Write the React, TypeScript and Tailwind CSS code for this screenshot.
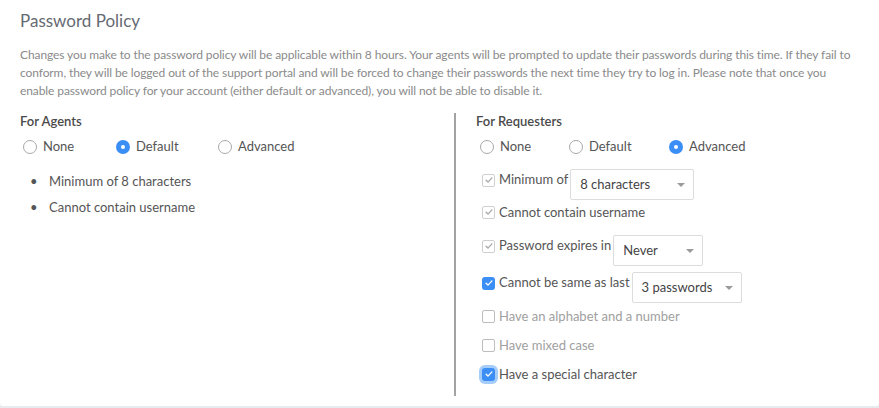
import React from 'react';

const font = { fontFamily: 'Lato, "Open Sans", sans-serif' };

function Radio({ checked, label }: { checked?: boolean; label: string }) {
  return (
    <label className="flex items-center gap-[6px]">
      {checked ? (
        <span className="flex h-[14px] w-[14px] items-center justify-center rounded-full bg-[#3a8ef6]">
          <span className="h-[4px] w-[4px] rounded-full bg-white" />
        </span>
      ) : (
        <span className="h-[14px] w-[14px] rounded-full border border-[#a9a9a9] bg-white" />
      )}
      <span>{label}</span>
    </label>
  );
}

function Check({ state }: { state: 'muted' | 'on' | 'off' | 'focus' }) {
  const tick = (color: string) => (
    <svg viewBox="0 0 12 12" className="h-[10px] w-[10px]">
      <path d="M2.5 6.2l2.3 2.3 4.7-5" fill="none" stroke={color} strokeWidth="1.6" strokeLinecap="round" strokeLinejoin="round" />
    </svg>
  );
  if (state === 'muted')
    return (
      <span className="flex h-[13px] w-[13px] shrink-0 items-center justify-center rounded-[2px] border border-[#cfcfcf] bg-white">
        {tick('#a8a8a8')}
      </span>
    );
  if (state === 'off')
    return <span className="h-[13px] w-[13px] shrink-0 rounded-[2px] border border-[#bdbdbd] bg-white" />;
  return (
    <span
      className={`flex h-[13px] w-[13px] shrink-0 items-center justify-center rounded-[3px] bg-[#3a8ef6] ${
        state === 'focus' ? 'ring-[3px] ring-[#a6cdf9]' : ''
      }`}
    >
      {tick('#ffffff')}
    </span>
  );
}

function Select({ value, width }: { value: string; width: string }) {
  return (
    <div className={`ml-[2px] flex h-[31px] ${width} items-center justify-between rounded-[2px] border border-[#dcdcdc] bg-white pl-[9px] pr-[8px] text-[#444]`}>
      <span>{value}</span>
      <span className="h-0 w-0 border-x-[4px] border-t-[4px] border-x-transparent border-t-[#9a9a9a]" />
    </div>
  );
}

// label that sits beside a select, aligned a little above the select's middle
function SelectRow({ check, label, value, width, className }: {
  check: 'muted' | 'on';
  label: string;
  value: string;
  width: string;
  className: string;
}) {
  return (
    <div className={`flex items-start ${className}`}>
      <div className="mt-[3px] flex h-[16px] items-center gap-[4px]">
        <Check state={check} />
        <span>{label}</span>
      </div>
      <Select value={value} width={width} />
    </div>
  );
}

export default function App() {
  return (
    <div className="h-[408px] w-[879px] bg-[#e8ebee]" style={font}>
      <div className="h-[406px] rounded-b-[3px] bg-white px-5 pt-[9px]">
        <h1 className="text-[17px] leading-[24px] text-[#656a72]">Password Policy</h1>
        <p className="mt-[13px] text-[12px] leading-[18px] tracking-[-0.1px] text-[#8a8a8a]">
          Changes you make to the password policy will be applicable within 8 hours. Your agents will be prompted to
          update their passwords during this time. If they fail to conform, they will be logged out of the support
          portal and will be forced to change their passwords the next time they try to log in. Please note that once
          you enable password policy for your account (either default or advanced), you will not be able to disable it.
        </p>

        <div className="mt-[13px] flex text-[13px] text-[#555]">
          <div className="w-[434px]">
            <h2 className="font-semibold leading-[16px] text-[#4a4a4a]">For Agents</h2>
            <div className="mt-[9px] flex h-[18px] items-center pl-[3px]">
              <div className="w-[93px]"><Radio label="None" /></div>
              <div className="w-[102px]"><Radio checked label="Default" /></div>
              <Radio label="Advanced" />
            </div>
            <ul className="mt-[16px] flex flex-col gap-[8px] pl-[10px]">
              <li className="flex items-center leading-[18px]">
                <span className="w-[19px] text-[#555]">•</span>Minimum of 8 characters
              </li>
              <li className="flex items-center leading-[18px]">
                <span className="w-[19px] text-[#555]">•</span>Cannot contain username
              </li>
            </ul>
          </div>

          <div className="h-[283px] border-l-2 border-[#a3a3a3] pl-5">
            <h2 className="font-semibold leading-[16px] text-[#4a4a4a]">For Requesters</h2>
            <div className="mt-[9px] flex h-[18px] items-center pl-[4px]">
              <div className="w-[89px]"><Radio label="None" /></div>
              <div className="w-[100px]"><Radio label="Default" /></div>
              <Radio checked label="Advanced" />
            </div>

            <div className="mt-[13px] flex flex-col pl-[6px]">
              <SelectRow check="muted" label="Minimum of" value="8 characters" width="w-[124px]" className="" />
              <div className="mt-[3px] flex items-center gap-[4px] leading-[18px]">
                <Check state="muted" />
                <span>Cannot contain username</span>
              </div>
              <SelectRow check="muted" label="Password expires in" value="Never" width="w-[90px]" className="mt-[14px]" />
              <SelectRow check="on" label="Cannot be same as last" value="3 passwords" width="w-[110px]" className="mt-[6px]" />
              <div className="mt-[4px] flex items-center gap-[4px] leading-[18px] text-[#a0a0a0]">
                <Check state="off" />
                <span>Have an alphabet and a number</span>
              </div>
              <div className="mt-[11px] flex items-center gap-[4px] leading-[18px] text-[#a0a0a0]">
                <Check state="off" />
                <span>Have mixed case</span>
              </div>
              <div className="mt-[11px] flex items-center gap-[4px] leading-[18px]">
                <Check state="focus" />
                <span>Have a special character</span>
              </div>
            </div>
          </div>
        </div>
      </div>
    </div>
  );
}
